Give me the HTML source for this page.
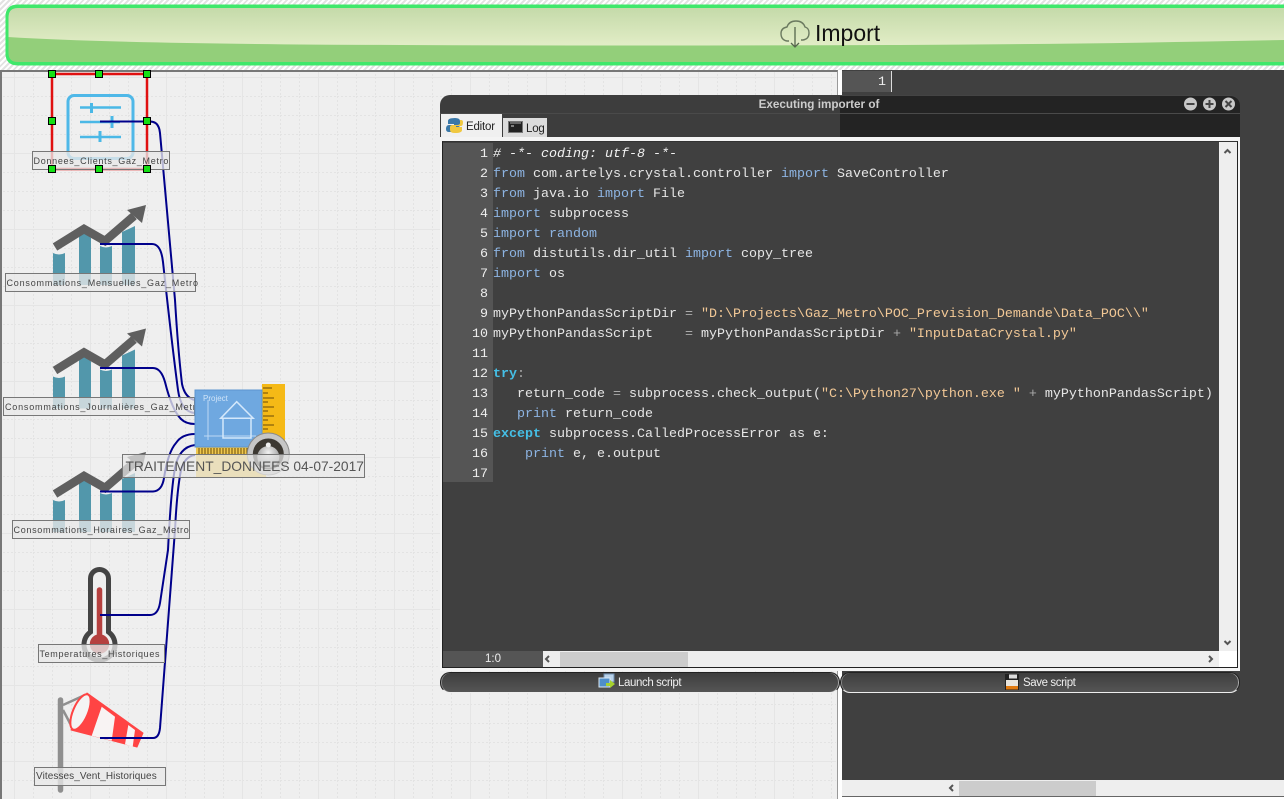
<!DOCTYPE html>
<html><head><meta charset="utf-8">
<style>
html,body{margin:0;padding:0;width:1284px;height:799px;overflow:hidden;background:#fff}
div{position:absolute;box-sizing:border-box}
#top{left:0;top:0;width:1284px;height:70px;background:repeating-linear-gradient(135deg,#fff 0 2px,#e2e2e2 2px 4px)}
#canvas{left:0;top:70px;width:838px;height:729px;background:#efefef;border-left:2px solid #777;border-top:2px solid #777;border-right:1px solid #999}
#rp{left:842px;top:70px;width:442px;height:710px;background:#404040}
.lbl{font:9px "Liberation Sans",sans-serif;letter-spacing:.7px;color:#444;background:rgba(232,232,232,.78);border:1px solid #777;white-space:nowrap;line-height:18px;height:19px;padding-left:1px}
pre{margin:0;font:13.333px/20px "Liberation Mono",monospace;color:#e6e6e6}
.k{color:#8db4e2}.s{color:#f2c896}.b{color:#45bfe6;font-weight:bold}.o{color:#aaa}
.ui{font:11.5px "Liberation Sans",sans-serif;color:#eee;white-space:nowrap;letter-spacing:-.4px}
.btn{top:672px;height:21px;width:400px;border-radius:10px;background:linear-gradient(#3e3e3e,#555);border:1px solid #222;border-bottom:1px solid #eee;box-shadow:inset -1px 0 0 #aaa,inset 1px 0 0 #888}
</style></head><body>
<div id="top"></div>
<svg style="position:absolute;left:0;top:0" width="1284" height="70">
<defs><linearGradient id="g" x1="0" y1="0" x2="0" y2="1"><stop offset="0" stop-color="#c3d9a8"/><stop offset="1" stop-color="#f0f6d4"/></linearGradient></defs>
<path d="M1290 6H18Q7 6 7 17V53Q7 64 18 64H1290Z" fill="url(#g)" stroke="#3fe86b" stroke-width="3"/>
<path d="M8 37Q120 44 400 45Q640 46 900 45Q1100 44 1284 40V62.500H18Q8 62.500 8 53Z" fill="#93cf7a"/>
<path d="M1284 6.500H18Q7 6.500 7 17V53Q7 63.500 18 63.500H1284" fill="none" stroke="#3fe86b" stroke-width="3"/>
<path d="M789 41H787Q781 40 781 33.500Q781 28 787 27Q789 21 796 21Q803 21 805 27Q809 28 809 33Q809 39 803 40H801" fill="none" stroke="#6b7a60" stroke-width="1.400"/>
<path d="M795 27V47M791 43L795 47L799 43" fill="none" stroke="#55664c" stroke-width="1.300"/>
</svg>
<div style="left:815px;top:19px;font:23px/28px 'Liberation Sans',sans-serif;color:#111">Import</div>

<div id="canvas"></div>
<svg style="position:absolute;left:0;top:70px" width="838" height="729">
<defs>
<pattern id="gr" x="14" y="7" width="19" height="19" patternUnits="userSpaceOnUse"><path d="M.5 0V19M0 .5H19" stroke="#e3e3e3" stroke-dasharray="2 2" fill="none"/></pattern>
<pattern id="gr2" x="14" y="7" width="76" height="76" patternUnits="userSpaceOnUse"><path d="M.5 0V76M0 .5H76" stroke="#e5e5e5" fill="none"/></pattern>
</defs>
<rect x="2" y="2" width="834" height="727" fill="url(#gr)"/>
<rect x="2" y="2" width="834" height="727" fill="url(#gr2)"/>
</svg>
<div style="left:838px;top:70px;width:4px;height:729px;background:#fff"></div>
<div id="rp"></div>
<div style="left:842px;top:71px;width:50px;height:21px;background:#555;color:#eee;font:13.333px/24px 'Liberation Mono',monospace;text-align:right;padding-right:5px;border-right:1px solid #ddd">1</div>
<div style="left:842px;top:780px;width:442px;height:19px;background:#eee;border-bottom:2px solid #fff;box-shadow:inset 0 -1px 0 #666"></div>
<div style="left:959px;top:781px;width:137px;height:15px;background:#ccc"></div>
<svg style="position:absolute;left:0;top:0" width="840" height="799">
<rect x="68" y="95.500" width="65" height="63" rx="6" fill="none" stroke="#4fb8e8" stroke-width="3"/>
<g stroke="#4ab8e6" stroke-width="2.500" fill="none"><path d="M80 107.500H121M80 122H120M80 137H121"/><path d="M91.500 103V113M112 116V128M100 131V142" stroke-width="3"/></g>
<g>
<path d="M53 253Q59 256 65 253V285H53ZM79 236L85 233L91 238V285H79ZM100 246Q106 249 112 246V285H100ZM122 232L135 226V285H122Z" fill="#5297ab"/>
<path d="M55 247L84 229L105 241L134 216" fill="none" stroke="#5f5f5f" stroke-width="8.500"/><path d="M127 210L146 205L142 223Z" fill="#5f5f5f"/></g>
<g transform="translate(0,123.500)"><path d="M53 253Q59 256 65 253V285H53ZM79 236L85 233L91 238V285H79ZM100 246Q106 249 112 246V285H100ZM122 232L135 226V285H122Z" fill="#5297ab"/>
<path d="M55 247L84 229L105 241L134 216" fill="none" stroke="#5f5f5f" stroke-width="8.500"/><path d="M127 210L146 205L142 223Z" fill="#5f5f5f"/></g>
<g transform="translate(0,247)"><path d="M53 253Q59 256 65 253V285H53ZM79 236L85 233L91 238V285H79ZM100 246Q106 249 112 246V285H100ZM122 232L135 226V285H122Z" fill="#5297ab"/>
<path d="M55 247L84 229L105 241L134 216" fill="none" stroke="#5f5f5f" stroke-width="8.500"/><path d="M127 210L146 205L142 223Z" fill="#5f5f5f"/></g>
<path d="M90.500 632V578.500A9 9 0 0 1 108.500 578.500V632A15.500 15.500 0 1 1 90.500 632Z" fill="#efefef" stroke="#444" stroke-width="5"/>
<path d="M99.500 590V645" stroke="#b5403f" stroke-width="5.500" stroke-linecap="round"/>
<circle cx="99.500" cy="644" r="9.700" fill="#b5403f"/>
<path d="M60.500 700V790" stroke="#8f8f8f" stroke-width="5.500" stroke-linecap="round"/>
<path d="M63 705L85 695M63 710L72 727" stroke="#8f8f8f" stroke-width="2.500"/>
<path d="M87 693L143 733L137 747L71 730Z" fill="#f44" stroke="#f44" stroke-linejoin="round"/>
<path d="M101.700 706.700L115 716.700L111.700 740.700L91.700 735.700ZM128.300 725L135 730L132.700 746.700L125 744.300Z" fill="#f8f3f3"/>
<ellipse cx="80.500" cy="712" rx="7.500" ry="19" transform="rotate(23 80.500 712)" fill="#f4f4f4" stroke="#f44" stroke-width="2"/>
<g fill="none" stroke="#00008b" stroke-width="2">
<path d="M100 121.500H150Q159 121.500 160 133L175 300Q178 350 182 384Q185 398 195 400"/>
<path d="M100 244H152Q161 244 163 262Q172 345 178 390Q181 412 195 413"/>
<path d="M100 368H153Q161 368 165 382Q172 410 181 419Q186 424 195 424"/>
<path d="M100 491.500H153Q162 491 164 478Q168 452 176 443Q182 434 195 434"/>
<path d="M100 615H150Q158 615 160 603L168 550Q171 490 175 468Q179 447 195 445"/>
<path d="M100 738H153Q159 738 160 728L175 530Q177 490 181 470Q185 456 195 455"/>
</g>
<rect x="52" y="74" width="95" height="95" fill="none" stroke="#e01010" stroke-width="2.500"/>
</svg>
<div class="lbl" style="left:31.500px;top:151px;width:138px">Donnees_Clients_Gaz_Metro</div>
<div class="lbl" style="left:4.500px;top:273px;width:191px;letter-spacing:.8px">Consommations_Mensuelles_Gaz_Metro</div>
<div class="lbl" style="left:3px;top:397px;width:192px;overflow:hidden;letter-spacing:.8px">Consommations_Journalières_Gaz_Metro</div>
<div class="lbl" style="left:11.500px;top:520px;width:178px">Consommations_Horaires_Gaz_Metro</div>
<div class="lbl" style="left:37.500px;top:644px;width:127px;letter-spacing:.65px">Temperatures_Historiques</div>
<div class="lbl" style="left:34px;top:767px;width:132px;font-size:10px;letter-spacing:.08px">Vitesses_Vent_Historiques</div>
<svg style="position:absolute;left:0;top:0" width="840" height="799">
<defs><radialGradient id="sp" cx=".5" cy=".3" r=".7"><stop offset="0" stop-color="#f2f2f2"/><stop offset="1" stop-color="#888"/></radialGradient></defs>
<rect x="262" y="384" width="23" height="60" fill="#f5b916"/>
<rect x="196" y="447" width="70" height="30" fill="#f0c84e"/>
<rect x="195" y="390" width="67" height="57" fill="#6fa8e0" stroke="#5c95cf"/>
<g stroke="#bcd9f5" fill="none"><path d="M208 400V440M204 436H256" stroke-width="1"/><path d="M220.700 418.300L236.700 401.700L253.300 418.300ZM223 419V438H251V419" stroke-width="1.500" stroke="#d4e8fb"/></g>
<text x="203" y="401" font-family="Liberation Sans" font-size="8" fill="#d0e4f8">Project</text>
<path d="M263 388H272M263 393H268M263 398H274M263 402H268M263 407H274M263 411H268M263 416H274M263 420H268M263 425H274M263 429H268" stroke="#6a4c08"/>
<path d="M199 448V455M202 448V455M205 448V455M208 448V455M211 448V455M214 448V455M217 448V455M220 448V455M223 448V455M226 448V455M229 448V455M232 448V455M235 448V455M238 448V455M241 448V455M244 448V455M247 448V455" stroke="#6a4c08"/>
<circle cx="268.300" cy="454" r="21" fill="#c6c6c6" stroke="#8a8a8a"/>
<circle cx="268.300" cy="454" r="15.500" fill="#3c3832"/>
<circle cx="268.300" cy="457" r="11" fill="url(#sp)"/>
<circle cx="268.300" cy="445" r="2.500" fill="#f0f0f0"/>
</svg>
<div class="lbl" style="left:121.500px;top:454px;width:243px;height:23.500px;font-size:13.800px;letter-spacing:0;line-height:23px;color:#555;padding-left:3px;background:rgba(232,232,232,.72)">TRAITEMENT_DONNEES 04-07-2017</div>
<svg style="position:absolute;left:0;top:0" width="160" height="180">
<g fill="#14e014" stroke="#000"><rect x="48.500" y="70.500" width="7" height="7"/><rect x="95.500" y="70.500" width="7" height="7"/><rect x="143.500" y="70.500" width="7" height="7"/><rect x="48.500" y="117.500" width="7" height="7"/><rect x="143.500" y="117.500" width="7" height="7"/><rect x="48.500" y="165.500" width="7" height="7"/><rect x="95.500" y="165.500" width="7" height="7"/><rect x="143.500" y="165.500" width="7" height="7"/></g>
</svg>

<div style="left:440px;top:95px;width:400px;height:43px;background:#3d3d3d;border-radius:10px 0 0 0"></div>
<div style="left:840px;top:95px;width:400px;height:43px;background:#232323;border-radius:0 10px 0 0;border-top:1px solid #444"></div>
<div style="left:440px;top:113px;width:800px;height:1px;background:#4a4a4a"></div>
<div style="left:440px;top:96px;width:758px;height:18px;text-align:center;font:bold 11.700px/18px 'Liberation Sans',sans-serif;color:#ccc">Executing importer of</div>
<svg style="position:absolute;left:1180px;top:95px" width="58" height="18">
<g fill="#c8c8c8"><circle cx="10.500" cy="9" r="6.500"/><circle cx="29.500" cy="9" r="6.500"/><circle cx="48.500" cy="9" r="6.500"/></g>
<path d="M6.500 9H14.500M25.500 9H33.500M29.500 5V13M45.500 6L51.500 12M51.500 6L45.500 12" stroke="#444" stroke-width="2"/>
</svg>
<div style="left:441px;top:114px;width:61px;height:24px;background:#f0f0f0"></div>
<div style="left:503px;top:118px;width:44px;height:20px;background:#dcdcdc"></div>
<svg style="position:absolute;left:446px;top:117px" width="90" height="20">
<path d="M9 1Q2 1 2 4V7H8V8H3Q0 8 0 12Q0 15 3 15H5V12Q5 10 8 10H12Q14 10 14 8V4Q14 1 9 1Z" fill="#3a78a8"/>
<path d="M9 16Q16 16 16 13V10H10V9H15Q17 9 17 5Q17 3 15 3H14V6Q14 8 11 8H7Q4 8 4 10V13Q4 16 9 16Z" fill="#f0c840"/>
<rect x="62.500" y="4.500" width="14" height="11" fill="#222" stroke="#777"/><path d="M64 6H75" stroke="#aaa"/><path d="M65 9H68" stroke="#ddd"/>
</svg>
<div class="ui" style="left:466px;top:120px;color:#222;line-height:14px;letter-spacing:-.2px">Editor</div>
<div class="ui" style="left:526px;top:122px;color:#222;line-height:14px;letter-spacing:-.2px">Log</div>

<div style="left:440px;top:137px;width:800px;height:534px;background:#f4f4f4"></div>
<div style="left:442px;top:141px;width:796px;height:527px;background:#404040;border:1px solid #222;border-top-color:#333"></div>
<div style="left:443px;top:143px;width:50px;height:339px;background:#555"></div>
<pre style="position:absolute;left:443px;top:145px;width:45px;text-align:right;color:#eee">1
2
3
4
5
6
7
8
9
10
11
12
13
14
15
16
17</pre>
<pre style="position:absolute;left:493px;top:145px"><i style="color:#f2f2f2"># -*- coding: utf-8 -*-</i>
<span class="k">from</span> com.artelys.crystal.controller <span class="k">import</span> SaveController
<span class="k">from</span> java.io <span class="k">import</span> File
<span class="k">import</span> subprocess
<span class="k">import</span> <span class="k">random</span>
<span class="k">from</span> distutils.dir_util <span class="k">import</span> copy_tree
<span class="k">import</span> os

myPythonPandasScriptDir <span class="o">=</span> <span class="s">"D:\Projects\Gaz_Metro\POC_Prevision_Demande\Data_POC\\"</span>
myPythonPandasScript    <span class="o">=</span> myPythonPandasScriptDir <span class="o">+</span> <span class="s">"InputDataCrystal.py"</span>

<span class="b">try</span><span class="o">:</span>
   return_code <span class="o">=</span> subprocess.check_output(<span class="s">"C:\Python27\python.exe "</span> <span class="o">+</span> myPythonPandasScript)
   <span class="k">print</span> return_code
<span class="b">except</span> subprocess.CalledProcessError as e:
    <span class="k">print</span> e, e.output</pre>
<div style="left:1219px;top:142px;width:18px;height:509px;background:#eee"></div>
<div style="left:443px;top:651px;width:100px;height:16px;background:#555;color:#eee;font:11.500px/17px 'Liberation Sans',sans-serif;text-align:center">1:0</div>
<div style="left:543px;top:651px;width:676px;height:16px;background:#eee"></div>
<div style="left:560px;top:652px;width:128px;height:15px;background:#ccc"></div>
<div style="left:1219px;top:651px;width:18px;height:16px;background:#fff"></div>
<svg style="position:absolute;left:0;top:0;pointer-events:none" width="1284" height="799">
<g fill="none" stroke="#555" stroke-width="2"><path d="M549 656L546 659L549 662"/><path d="M1209 656L1212 659L1209 662"/><path d="M1224.500 153L1227.500 150L1230.500 153"/><path d="M1224.500 641L1227.500 644L1230.500 641"/><path d="M953 785L950 788L953 791"/></g>
</svg>
<div class="btn" style="left:440px"></div>
<div class="btn" style="left:840px"></div>
<svg style="position:absolute;left:598px;top:673px" width="20" height="18">
<rect x="6" y="1" width="10" height="8" fill="#b9d2ea" stroke="#6d8db0"/><rect x="1" y="5" width="11" height="9" fill="#4f8ec9" stroke="#dce9f5"/><path d="M8 10H12V7L17 11L12 15V13H8Z" fill="#a6d22e"/>
</svg>
<div class="ui" style="left:618px;top:676px;line-height:14px;width:70px">Launch script</div>
<svg style="position:absolute;left:1004px;top:673px" width="18" height="18">
<rect x="1" y="1" width="14" height="16" fill="#222"/><rect x="5" y="1.500" width="8" height="4" fill="#ddd"/><rect x="2" y="7" width="12" height="6" fill="#e8e4dc"/><rect x="2" y="13" width="12" height="3.500" fill="#e07a10"/>
</svg>
<div class="ui" style="left:1023px;top:676px;line-height:14px">Save script</div>
</body></html>
